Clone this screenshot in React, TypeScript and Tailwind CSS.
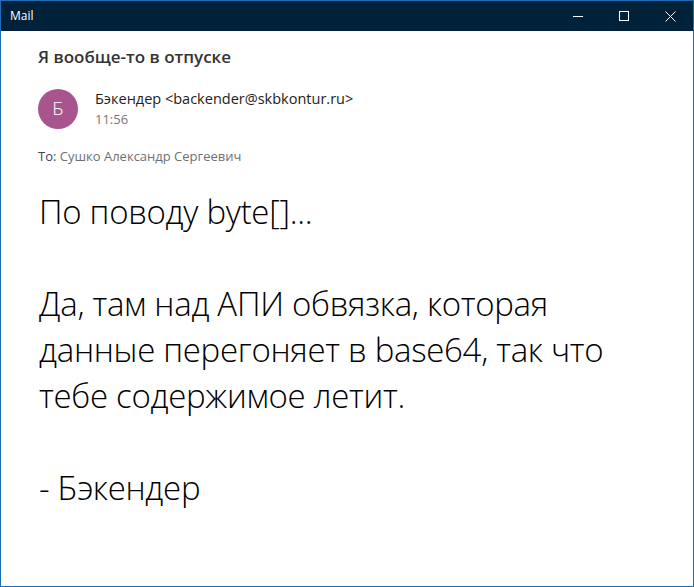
import React from 'react';

const App: React.FC = () => {
  return (
    <div className="w-[694px] h-[587px] border border-[#1a6fb8] bg-white flex flex-col overflow-hidden font-['Open_Sans',sans-serif]">
      {/* Title bar */}
      <div className="h-[30px] bg-[#00213a] flex items-center justify-between shrink-0">
        <span className="pl-[9px] text-[12px] text-white">Mail</span>
        <div className="flex h-full">
          <div className="w-[46px] h-full flex items-center justify-center">
            <div className="w-[10px] h-px bg-white" />
          </div>
          <div className="w-[46px] h-full flex items-center justify-center">
            <div className="w-[10px] h-[10px] border border-white" />
          </div>
          <div className="w-[46px] h-full flex items-center justify-center">
            <svg width="11" height="11" viewBox="0 0 11 11" stroke="white" strokeWidth="1">
              <path d="M0.5 0.5 L10.5 10.5 M10.5 0.5 L0.5 10.5" />
            </svg>
          </div>
        </div>
      </div>

      {/* Message */}
      <div className="pl-[37px] pt-[14px]">
        <h1 className="text-[17px] leading-[24px] font-semibold text-[#333]">Я вообще-то в отпуске</h1>

        <div className="flex items-center gap-[17px] mt-[18px]">
          <div className="w-[40px] h-[40px] rounded-full bg-[#a8558f] flex items-center justify-center text-white text-[19px] font-light">
            Б
          </div>
          <div className="flex flex-col leading-[21px] pt-[1px]">
            <span className="text-[14.5px] text-[#222]">Бэкендер &lt;backender@skbkontur.ru&gt;</span>
            <span className="text-[13px] text-[#777]">11:56</span>
          </div>
        </div>

        <p className="mt-[17px] text-[13px] text-[#444]">
          To: <span className="text-[#707070]">Сушко Александр Сергеевич</span>
        </p>

        <div className="mt-[22px] pl-[1px] text-[33px] leading-[46px] text-black font-light tracking-[-0.3px]">
          <p>По поводу byte[]...</p>
          <p>&nbsp;</p>
          <p>Да, там над АПИ обвязка, которая</p>
          <p>данные перегоняет в base64, так что</p>
          <p>тебе содержимое летит.</p>
          <p>&nbsp;</p>
          <p>- Бэкендер</p>
        </div>
      </div>
    </div>
  );
};

export default App;
